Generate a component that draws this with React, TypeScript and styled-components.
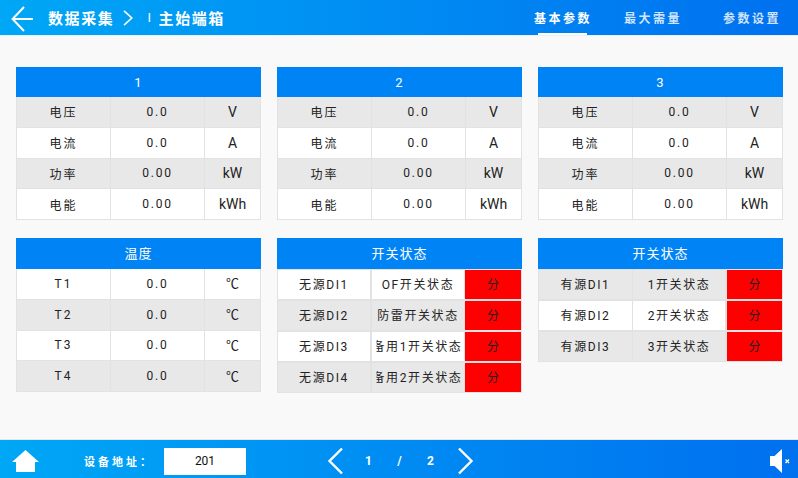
import React from 'react';
import styled, { createGlobalStyle } from 'styled-components';

const GlobalStyle = createGlobalStyle`
  html, body {
    margin: 0;
    padding: 0;
    background: #f9f9f9;
  }
  * {
    box-sizing: border-box;
  }
`;

const FONT = `"Roboto", "Noto Sans CJK SC", sans-serif`;
const BAR = 'linear-gradient(90deg, #00a7f6 0%, #0070ef 100%)';

const Page = styled.div`
  width: 798px;
  height: 478px;
  display: flex;
  flex-direction: column;
  overflow: hidden;
  font-family: ${FONT};
  background: #f9f9f9;
`;

const TopBar = styled.header`
  height: 36px;
  display: flex;
  align-items: stretch;
  background: ${BAR};
  border-bottom: 1px solid #e4f1fd;
  color: #fff;
`;

const BackButton = styled.div`
  width: 48px;
  display: flex;
  align-items: center;
  padding: 2px 0 0 11px;
`;

const Crumbs = styled.div`
  flex: 1;
  display: flex;
  align-items: center;
  font-size: 15px;
  font-weight: 700;
  letter-spacing: 1.6px;
`;

const CrumbChevron = styled.svg`
  display: block;
  margin-left: 9px;
`;

const Separator = styled.span`
  font-weight: 400;
  font-size: 13px;
  margin: 0 6px 0 14px;
`;

const Tabs = styled.nav`
  display: flex;
  padding-right: 11px;
`;

const Tab = styled.div<{ $active?: boolean; $gap: number }>`
  width: 70px;
  margin-left: ${(p) => p.$gap}px;
  display: flex;
  align-items: center;
  justify-content: center;
  font-size: 12px;
  font-weight: 700;
  letter-spacing: 2.5px;
  color: ${(p) => (p.$active ? '#fff' : 'rgba(255, 255, 255, 0.82)')};
  position: relative;

  &::after {
    content: '';
    display: ${(p) => (p.$active ? 'block' : 'none')};
    position: absolute;
    left: 10px;
    bottom: 0;
    width: 49px;
    height: 2px;
    background: #fff;
  }
`;

const Content = styled.main`
  flex: 1;
  display: grid;
  grid-template-columns: repeat(3, 245px);
  column-gap: 16px;
  row-gap: 18px;
  align-content: start;
  padding: 31px 0 0 16px;
`;

const Panel = styled.section``;

const PanelTitle = styled.div<{ $tall?: boolean; $lift?: boolean }>`
  height: ${(p) => (p.$tall ? 31 : 30)}px;
  padding-bottom: ${(p) => (p.$lift ? 3 : 0)}px;
  background: #0083f4;
  color: #fff;
  font-size: 13px;
  letter-spacing: 1px;
  display: flex;
  align-items: center;
  justify-content: center;
`;

const Row = styled.div<{ $shade: boolean }>`
  display: grid;
  grid-template-columns: 93px 94px 56px;
  height: 30.75px;
  background: ${(p) => (p.$shade ? '#e8e8e8' : '#fff')};
  border: 1px solid #e2e2e2;
  border-top: 0;
  color: #222;
  font-size: 12px;
`;

const Cell = styled.div`
  display: flex;
  align-items: center;
  justify-content: center;
  white-space: nowrap;

  & + & {
    border-left: 1px solid #e2e2e2;
  }
`;

const LabelCell = styled(Cell)`
  letter-spacing: 2px;
`;

const ValueCell = styled(Cell)`
  letter-spacing: 1.8px;
`;

const UnitCell = styled(Cell)<{ $size: number }>`
  font-size: ${(p) => p.$size}px;
  padding-bottom: ${(p) => (p.$size < 14 ? 2 : 0)}px;
`;

const SwitchBody = styled.div`
  display: flex;
  flex-direction: column;
  gap: 2px;
  padding: 1px;
  background: #e2e2e2;
`;

const SwitchRow = styled.div<{ $cols: string }>`
  display: grid;
  grid-template-columns: ${(p) => p.$cols};
  height: 29px;
  color: #222;
  font-size: 12px;
`;

const SwitchCell = styled.div<{ $shade: boolean; $gap: number }>`
  display: flex;
  align-items: center;
  justify-content: center;
  overflow: hidden;
  white-space: nowrap;
  letter-spacing: 1.6px;
  padding-bottom: 2px;
  margin-right: ${(p) => p.$gap}px;
  background: ${(p) => (p.$shade ? '#e8e8e8' : '#fff')};
`;

const SwitchText = styled.span<{ $clipped: boolean }>`
  clip-path: ${(p) => (p.$clipped ? 'inset(0 0 0 4px)' : 'none')};
  margin-right: ${(p) => (p.$clipped ? 1 : 0)}px;
`;

const StateCell = styled.div`
  display: flex;
  align-items: center;
  justify-content: center;
  padding-bottom: 2px;
  background: #ff0000;
  color: #222;
  font-size: 12px;
`;

const BottomBar = styled.footer`
  height: 39px;
  display: flex;
  align-items: center;
  padding-top: 4px;
  background: ${BAR};
  border-top: 1px solid #e6e6e6;
  color: #fff;
`;

const HomeButton = styled.div`
  width: 84px;
  display: flex;
  padding-left: 12px;
`;

const AddressLabel = styled.div`
  width: 80px;
  font-size: 11px;
  font-weight: 700;
  letter-spacing: 3px;
  white-space: nowrap;
`;

const AddressValue = styled.div`
  width: 82px;
  height: 27px;
  background: #fff;
  color: #111;
  font-size: 12px;
  display: flex;
  align-items: center;
  justify-content: center;
`;

const Pager = styled.div`
  margin-left: 81px;
  display: flex;
  align-items: center;
  font-size: 12px;
  font-weight: 700;
`;

const PagerText = styled.span`
  width: 31px;
  text-align: center;
`;

const PagerArrow = styled.svg<{ $before: number; $after: number }>`
  display: block;
  width: 18px;
  height: 28px;
  margin: 0 ${(p) => p.$after}px 0 ${(p) => p.$before}px;
`;

const Mute = styled.div`
  margin-left: auto;
  padding-right: 8px;
  display: flex;
`;

const meter = [
  ['电压', '0.0', 'V'],
  ['电流', '0.0', 'A'],
  ['功率', '0.00', 'kW'],
  ['电能', '0.00', 'kWh'],
];

const temps = [
  ['T1', '0.0', '℃'],
  ['T2', '0.0', '℃'],
  ['T3', '0.0', '℃'],
  ['T4', '0.0', '℃'],
];

const passive = [
  ['无源DI1', 'OF开关状态'],
  ['无源DI2', '防雷开关状态'],
  ['无源DI3', '备用1开关状态'],
  ['无源DI4', '备用2开关状态'],
];

const active = [
  ['有源DI1', '1开关状态'],
  ['有源DI2', '2开关状态'],
  ['有源DI3', '3开关状态'],
];

const DataPanel = ({
  title,
  rows,
  shadeFirst,
  tall,
  unitSize,
}: {
  title: string;
  rows: string[][];
  shadeFirst: boolean;
  tall?: boolean;
  unitSize: number;
}) => (
  <Panel>
    <PanelTitle $tall={tall} $lift={tall}>{title}</PanelTitle>
    {rows.map((r, i) => (
      <Row key={r[0]} $shade={(i % 2 === 0) === shadeFirst}>
        <LabelCell>{r[0]}</LabelCell>
        <ValueCell>{r[1]}</ValueCell>
        <UnitCell $size={unitSize}>{r[2]}</UnitCell>
      </Row>
    ))}
  </Panel>
);

const SwitchPanel = ({
  rows,
  shadeFirst,
  cols,
  firstGap,
}: {
  rows: string[][];
  shadeFirst: boolean;
  cols: string;
  firstGap: number;
}) => (
  <Panel>
    <PanelTitle $tall $lift>开关状态</PanelTitle>
    <SwitchBody>
      {rows.map((r, i) => {
        const shade = (i % 2 === 0) === shadeFirst;
        return (
          <SwitchRow key={r[0]} $cols={cols}>
            <SwitchCell $shade={shade} $gap={firstGap}>{r[0]}</SwitchCell>
            <SwitchCell $shade={shade} $gap={3 - firstGap}>
              {/* the long names overflow their cell on the device */}
              <SwitchText $clipped={r[1].startsWith('备')}>{r[1]}</SwitchText>
            </SwitchCell>
            <StateCell>分</StateCell>
          </SwitchRow>
        );
      })}
    </SwitchBody>
  </Panel>
);

export default function App() {
  return (
    <Page>
      <GlobalStyle />
      <TopBar>
        <BackButton>
          <svg width="22" height="26" viewBox="0 0 22 26" fill="none" stroke="#fff" strokeWidth="2">
            <path d="M13 1 1.6 13 13 25M2 13h20" />
          </svg>
        </BackButton>
        <Crumbs>
          <span>数据采集</span>
          <CrumbChevron width="10" height="16" viewBox="0 0 10 16" fill="none" stroke="#fff" strokeWidth="1.6">
            <path d="M1 .8 8.8 8 1 15.2" />
          </CrumbChevron>
          <Separator>I</Separator>
          <span>主始端箱</span>
        </Crumbs>
        <Tabs>
          <Tab $active $gap={0}>基本参数</Tab>
          <Tab $gap={20}>最大需量</Tab>
          <Tab $gap={29}>参数设置</Tab>
        </Tabs>
      </TopBar>
      <Content>
        <DataPanel title="1" rows={meter} shadeFirst unitSize={14} />
        <DataPanel title="2" rows={meter} shadeFirst unitSize={14} />
        <DataPanel title="3" rows={meter} shadeFirst unitSize={14} />
        <DataPanel title="温度" rows={temps} shadeFirst={false} tall unitSize={13} />
        <SwitchPanel rows={passive} shadeFirst={false} cols="94px 93px 56px" firstGap={2} />
        <SwitchPanel rows={active} shadeFirst cols="94px 94px 55px" firstGap={1} />
      </Content>
      <BottomBar>
        <HomeButton>
          <svg width="27" height="22" viewBox="0 0 27 22" fill="#fff">
            <path d="M13.5 0 27 12h-4v10H4V12H0z" />
          </svg>
        </HomeButton>
        <AddressLabel>设备地址：</AddressLabel>
        <AddressValue>201</AddressValue>
        <Pager>
          <PagerArrow $before={0} $after={8} viewBox="0 0 18 28" fill="none" stroke="#fff" strokeWidth="2.4">
            <path d="M15 1.5 2.5 14 15 26.5" />
          </PagerArrow>
          <PagerText>1</PagerText>
          <PagerText>/</PagerText>
          <PagerText>2</PagerText>
          <PagerArrow $before={10} $after={0} viewBox="0 0 18 28" fill="none" stroke="#fff" strokeWidth="2.4">
            <path d="M3 1.5 15.5 14 3 26.5" />
          </PagerArrow>
        </Pager>
        <Mute>
          <svg width="20" height="24" viewBox="0 0 20 24" fill="#fff">
            <path d="M0 7h4.5L12 0v24l-7.5-7H0z" />
            <path d="M15.5 10.5 19 14M19 10.5 15.5 14" stroke="#fff" strokeWidth="1.4" fill="none" />
          </svg>
        </Mute>
      </BottomBar>
    </Page>
  );
}
